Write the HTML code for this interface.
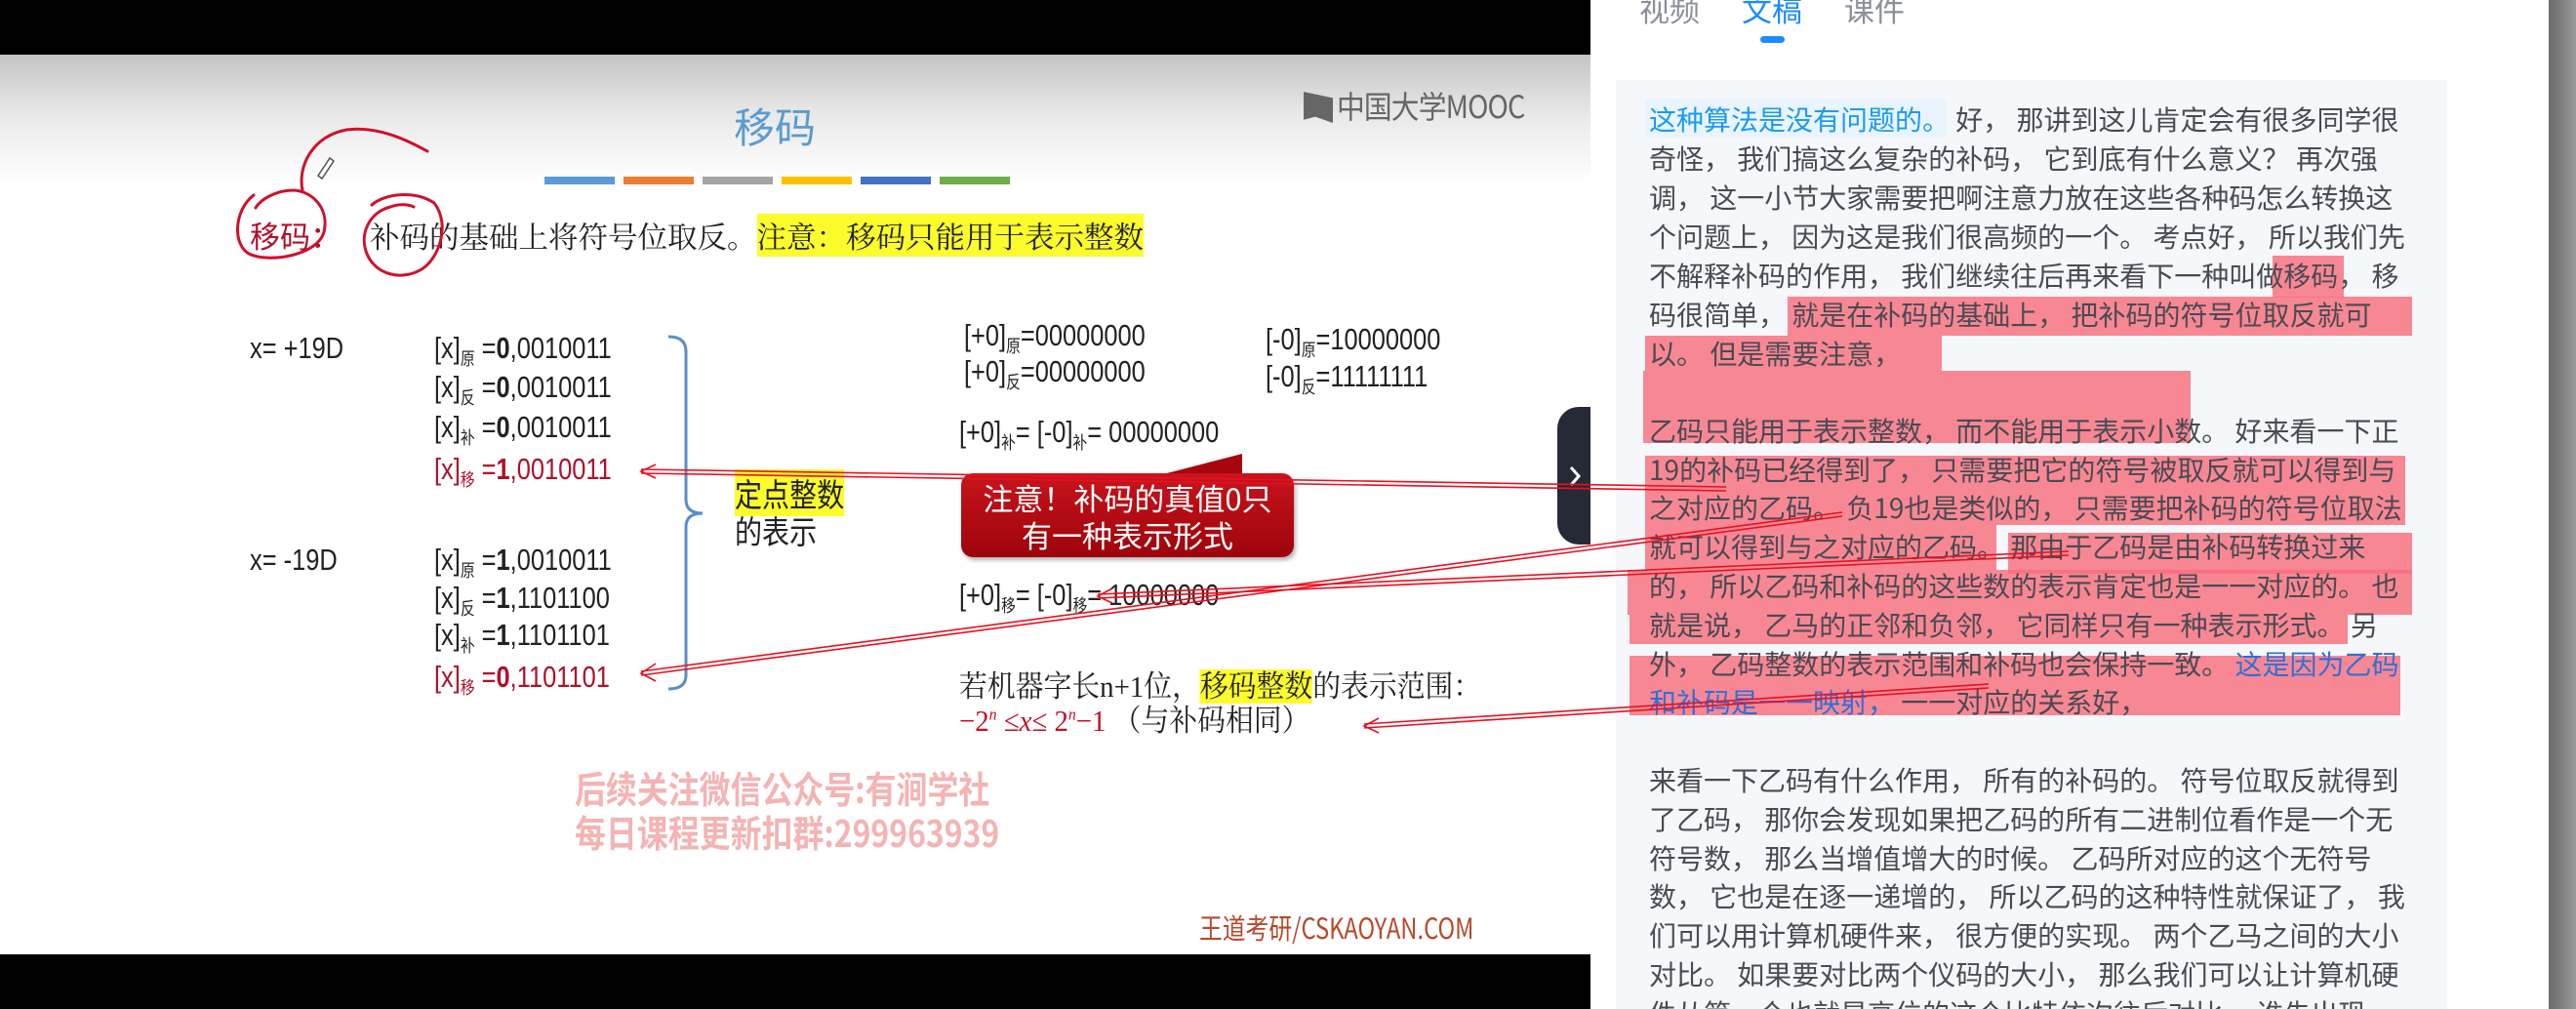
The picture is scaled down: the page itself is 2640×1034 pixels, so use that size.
<!DOCTYPE html>
<html style="width:2640px;height:1034px;overflow:hidden"><head><meta charset="utf-8">
<style>
*{margin:0;padding:0;box-sizing:border-box}
body{width:2640px;height:1034px;overflow:hidden;background:#000;position:relative;font-family:"Liberation Sans","Noto Sans CJK SC",sans-serif}
.abs{position:absolute;white-space:pre;line-height:1}
#slide{position:absolute;left:0;top:56px;width:1630px;height:922px;background:linear-gradient(#c4c4c4 0,#e8e8e8 60px,#fff 130px,#fff 100%)}
.s{font-family:"Liberation Sans","Noto Sans CJK SC",sans-serif;font-size:31px;color:#222;transform:scaleX(.82);transform-origin:left center}
.s sub{font-size:18px;vertical-align:-7px;font-family:"Noto Sans CJK SC",sans-serif}
.red{color:#b0102a}
#panel{position:absolute;left:1630px;top:0;width:1010px;height:1034px;background:#fff}
#txt{position:absolute;left:1656px;top:82px;width:852px;height:952px;background:#f5f7fb}
.ln{position:absolute;left:1690px;font-family:"Noto Sans CJK SC",sans-serif;font-size:28px;color:#4a4a52;white-space:pre;line-height:1}
.hl{position:absolute;background:rgba(249,110,124,.82)}
.y{background:#fcfc2c}
</style></head><body>
<div id="slide"></div>
<div class="abs" style="left:752px;top:108px;font-size:42px;color:#5b9bd0;font-family:'Noto Sans CJK SC',sans-serif">移码</div>
<div class="abs" style="left:558px;top:181px;width:72px;height:8px;background:#5b9bd5"></div>
<div class="abs" style="left:639px;top:181px;width:72px;height:8px;background:#ed7d31"></div>
<div class="abs" style="left:720px;top:181px;width:72px;height:8px;background:#a5a5a5"></div>
<div class="abs" style="left:801px;top:181px;width:72px;height:8px;background:#ffc000"></div>
<div class="abs" style="left:882px;top:181px;width:72px;height:8px;background:#4472c4"></div>
<div class="abs" style="left:963px;top:181px;width:72px;height:8px;background:#70ad47"></div>
<div class="abs" style="left:1336px;top:94px;width:30px;height:32px;background:#666;clip-path:polygon(0 0,100% 20%,100% 100%,40% 80%,0 90%)"></div>
<div class="abs" style="left:1370px;top:92px;font-size:32px;color:#666;font-family:'Noto Sans CJK SC',sans-serif;letter-spacing:-1px;transform:scaleX(.9);transform-origin:left">中国大学MOOC</div>
<div class="abs" style="left:256px;top:225px;font-size:31px;color:#b0102a;font-family:'Noto Sans CJK SC',sans-serif">移码：</div>
<div class="abs" style="left:379px;top:222px;font-size:30.5px;line-height:38px;color:#222;font-family:'Noto Serif CJK SC','Noto Sans CJK SC',serif">补码的基础上将符号位取反。<span class="y">注意：移码只能用于表示整数</span></div>

<div class="abs s" style="left:256px;top:341px">x= +19D</div>
<div class="abs s" style="left:256px;top:558px">x= -19D</div>
<div class="abs s" style="left:445px;top:341px">[x]<sub>原</sub> =<b>0</b>,0010011</div>
<div class="abs s" style="left:445px;top:381px">[x]<sub>反</sub> =<b>0</b>,0010011</div>
<div class="abs s" style="left:445px;top:422px">[x]<sub>补</sub> =<b>0</b>,0010011</div>
<div class="abs s red" style="left:445px;top:465px">[x]<sub>移</sub> =<b>1</b>,0010011</div>
<div class="abs s" style="left:445px;top:558px">[x]<sub>原</sub> =<b>1</b>,0010011</div>
<div class="abs s" style="left:445px;top:597px">[x]<sub>反</sub> =<b>1</b>,1101100</div>
<div class="abs s" style="left:445px;top:635px">[x]<sub>补</sub> =<b>1</b>,1101101</div>
<div class="abs s red" style="left:445px;top:678px">[x]<sub>移</sub> =<b>0</b>,1101101</div>
<svg class="abs" style="left:0;top:0" width="1630" height="1034">
<path d="M685 345 Q703 345 703 360 L703 512 Q703 526 720 526 Q703 526 703 540 L703 692 Q703 706 685 706" fill="none" stroke="#5b8ec4" stroke-width="3"/>
<g fill="none" stroke="#d0102a" stroke-width="3" stroke-linecap="round">
<path d="M260 200 C240 215 238 250 255 260 C275 270 325 262 332 238 C338 212 318 195 300 195 C285 195 268 203 262 213"/>
<path d="M310 195 C305 170 320 140 355 133 C390 128 425 148 438 155"/>
<path d="M381 210 C395 198 425 195 445 208 C462 230 450 265 432 276 C412 288 385 282 376 260 C368 240 378 218 400 212 C410 208 420 210 424 212"/>
</g>
<path d="M326 180 L338 162 L342 165 L330 183 Z" fill="#fff" stroke="#555" stroke-width="1.5"/>
</svg>
<div class="abs" style="left:753px;top:486px;font-size:33px;line-height:38px;color:#222;font-family:'Noto Sans CJK SC',sans-serif;transform:scaleX(.85);transform-origin:left"><span class="y">定点整数</span>
的表示</div>
<div class="abs s" style="left:988px;top:328px">[+0]<sub>原</sub>=00000000</div>
<div class="abs s" style="left:988px;top:365px">[+0]<sub>反</sub>=00000000</div>
<div class="abs s" style="left:1297px;top:332px">[-0]<sub>原</sub>=10000000</div>
<div class="abs s" style="left:1297px;top:370px">[-0]<sub>反</sub>=11111111</div>
<div class="abs s" style="left:983px;top:427px">[+0]<sub>补</sub>= [-0]<sub>补</sub>= 00000000</div>
<div class="abs" style="left:1188px;top:465px;width:85px;height:22px;background:#a8060e;clip-path:polygon(0 100%,100% 0,100% 100%)"></div>
<div class="abs" style="left:985px;top:485px;width:341px;height:86px;border-radius:12px;background:linear-gradient(#c8141c,#9e040c);box-shadow:2px 3px 4px rgba(0,0,0,.3)"></div>
<div class="abs" style="left:985px;top:491px;width:341px;text-align:center;font-size:31px;line-height:38px;color:#fff;font-family:'Noto Sans CJK SC',sans-serif">注意！补码的真值0只
有一种表示形式</div>
<div class="abs s" style="left:983px;top:594px">[+0]<sub>移</sub>= [-0]<sub>移</sub>= 10000000</div>
<div class="abs" style="left:983px;top:685px;font-size:31px;line-height:38px;color:#222;font-family:'Liberation Serif','Noto Serif CJK SC',serif;transform:scaleX(.93);transform-origin:left">若机器字长n+1位，<span class="y">移码整数</span>的表示范围：</div>
<div class="abs" style="left:983px;top:723px;font-size:31px;color:#222;font-family:'Liberation Serif','Noto Serif CJK SC',serif;transform:scaleX(.93);transform-origin:left"><span style="color:#c0102a">−2<sup style="font-size:17px;font-style:italic">n</sup> ≤<i>x</i>≤ 2<sup style="font-size:17px;font-style:italic">n</sup>−1</span> （与补码相同）</div>
<div class="abs" style="left:589px;top:788px;font-size:38px;font-weight:bold;color:#f4b4b4;font-family:'Noto Sans CJK SC',sans-serif;transform:scaleX(.84);transform-origin:left">后续关注微信公众号:有涧学社</div>
<div class="abs" style="left:589px;top:833px;font-size:38px;font-weight:bold;color:#f4b4b4;font-family:'Noto Sans CJK SC',sans-serif;transform:scaleX(.84);transform-origin:left">每日课程更新扣群:299963939</div>
<div class="abs" style="left:1229px;top:936px;font-size:29px;color:#b8482a;font-family:'Noto Sans CJK SC',sans-serif;transform:scaleX(.82);transform-origin:left">王道考研/CSKAOYAN.COM</div>

<div id="panel"></div>
<div class="abs" style="left:2612px;top:0;width:28px;height:1034px;background:linear-gradient(90deg,#6a6a6a,#9a9a9a)"></div>
<div class="abs" style="left:1680px;top:-7px;font-size:31px;color:#8a8f99;font-family:'Noto Sans CJK SC',sans-serif">视频</div>
<div class="abs" style="left:1785px;top:-7px;font-size:31px;color:#1a8cff;font-family:'Noto Sans CJK SC',sans-serif">文稿</div>
<div class="abs" style="left:1890px;top:-7px;font-size:31px;color:#8a8f99;font-family:'Noto Sans CJK SC',sans-serif">课件</div>
<div class="abs" style="left:1804px;top:37px;width:25px;height:7px;border-radius:4px;background:#1a8cff"></div>
<div id="txt"></div>
<div class="abs" style="left:1686px;top:101px;width:309px;height:40px;background:#eaf4ff"></div>
<div class="hl" style="left:2329px;top:262px;width:73px;height:43px"></div>
<div class="hl" style="left:1832px;top:304px;width:640px;height:40px"></div>
<div class="hl" style="left:1686px;top:344px;width:304px;height:36px"></div>
<div class="hl" style="left:1684px;top:380px;width:561px;height:74px"></div>
<div class="hl" style="left:1686px;top:467px;width:779px;height:71px"></div>
<div class="hl" style="left:1686px;top:538px;width:360px;height:46px"></div>
<div class="hl" style="left:2058px;top:546px;width:414px;height:42px"></div>
<div class="hl" style="left:1668px;top:584px;width:804px;height:46px"></div>
<div class="hl" style="left:1670px;top:630px;width:736px;height:30px"></div>
<div class="hl" style="left:1670px;top:672px;width:790px;height:61px"></div>
<div class="ln" style="top:108px"><span style="color:#1a9bef">这种算法是没有问题的。</span> 好， 那讲到这儿肯定会有很多同学很</div>
<div class="ln" style="top:148px">奇怪， 我们搞这么复杂的补码， 它到底有什么意义？ 再次强</div>
<div class="ln" style="top:188px">调， 这一小节大家需要把啊注意力放在这些各种码怎么转换这</div>
<div class="ln" style="top:228px">个问题上， 因为这是我们很高频的一个。 考点好， 所以我们先</div>
<div class="ln" style="top:268px">不解释补码的作用， 我们继续往后再来看下一种叫做移码， 移</div>
<div class="ln" style="top:308px">码很简单， 就是在补码的基础上， 把补码的符号位取反就可</div>
<div class="ln" style="top:348px">以。 但是需要注意，</div>
<div class="ln" style="top:427px">乙码只能用于表示整数， 而不能用于表示小数。 好来看一下正</div>
<div class="ln" style="top:467px">19的补码已经得到了， 只需要把它的符号被取反就可以得到与</div>
<div class="ln" style="top:506px">之对应的乙码。 负19也是类似的， 只需要把补码的符号位取法</div>
<div class="ln" style="top:546px">就可以得到与之对应的乙码。 那由于乙码是由补码转换过来</div>
<div class="ln" style="top:586px">的， 所以乙码和补码的这些数的表示肯定也是一一对应的。 也</div>
<div class="ln" style="top:626px">就是说， 乙马的正邻和负邻， 它同样只有一种表示形式。 另</div>
<div class="ln" style="top:666px">外， 乙码整数的表示范围和补码也会保持一致。 <span style="color:#2f6fd6">这是因为乙码</span></div>
<div class="ln" style="top:705px"><span style="color:#2f6fd6">和补码是一一映射，</span> 一一对应的关系好，</div>
<div class="ln" style="top:785px">来看一下乙码有什么作用， 所有的补码的。 符号位取反就得到</div>
<div class="ln" style="top:825px">了乙码， 那你会发现如果把乙码的所有二进制位看作是一个无</div>
<div class="ln" style="top:865px">符号数， 那么当增值增大的时候。 乙码所对应的这个无符号</div>
<div class="ln" style="top:904px">数， 它也是在逐一递增的， 所以乙码的这种特性就保证了， 我</div>
<div class="ln" style="top:944px">们可以用计算机硬件来， 很方便的实现。 两个乙马之间的大小</div>
<div class="ln" style="top:984px">对比。 如果要对比两个仪码的大小， 那么我们可以让计算机硬</div>
<div style="position:absolute;left:1656px;top:1018px;width:852px;height:16px;overflow:hidden"><div class="ln" style="left:34px;top:6px">件从第一个也就是高位的这个比特依次往后对比， 谁先出现一</div></div>

<div class="abs" style="left:1596px;top:417px;width:34px;height:141px;background:#262a36;border-radius:22px 0 0 22px"></div>
<svg class="abs" style="left:1596px;top:417px" width="34" height="141"><path d="M14 62 L22 71 L14 80" fill="none" stroke="#fff" stroke-width="3"/></svg>

<svg class="abs" style="left:0;top:0" width="2640" height="1034">
<g fill="none" stroke="#e81020" stroke-width="1.6">
<path d="M657 481 L1769 499"/><path d="M657 485 L1769 503"/>
<path d="M657 688 L1888 525"/><path d="M657 692 L1888 529"/>
<path d="M1125 609 L2120 565"/><path d="M1125 613 L2120 569"/>
<path d="M1398 742 L2038 701"/><path d="M1398 746 L2038 705"/>
<path d="M672 476 L657 483 L672 490"/>
<path d="M672 680 L657 690 L672 698"/>
<path d="M1140 603 L1125 611 L1140 618"/>
<path d="M1413 736 L1398 744 L1413 751"/>
</g>
</svg>
</body></html>
